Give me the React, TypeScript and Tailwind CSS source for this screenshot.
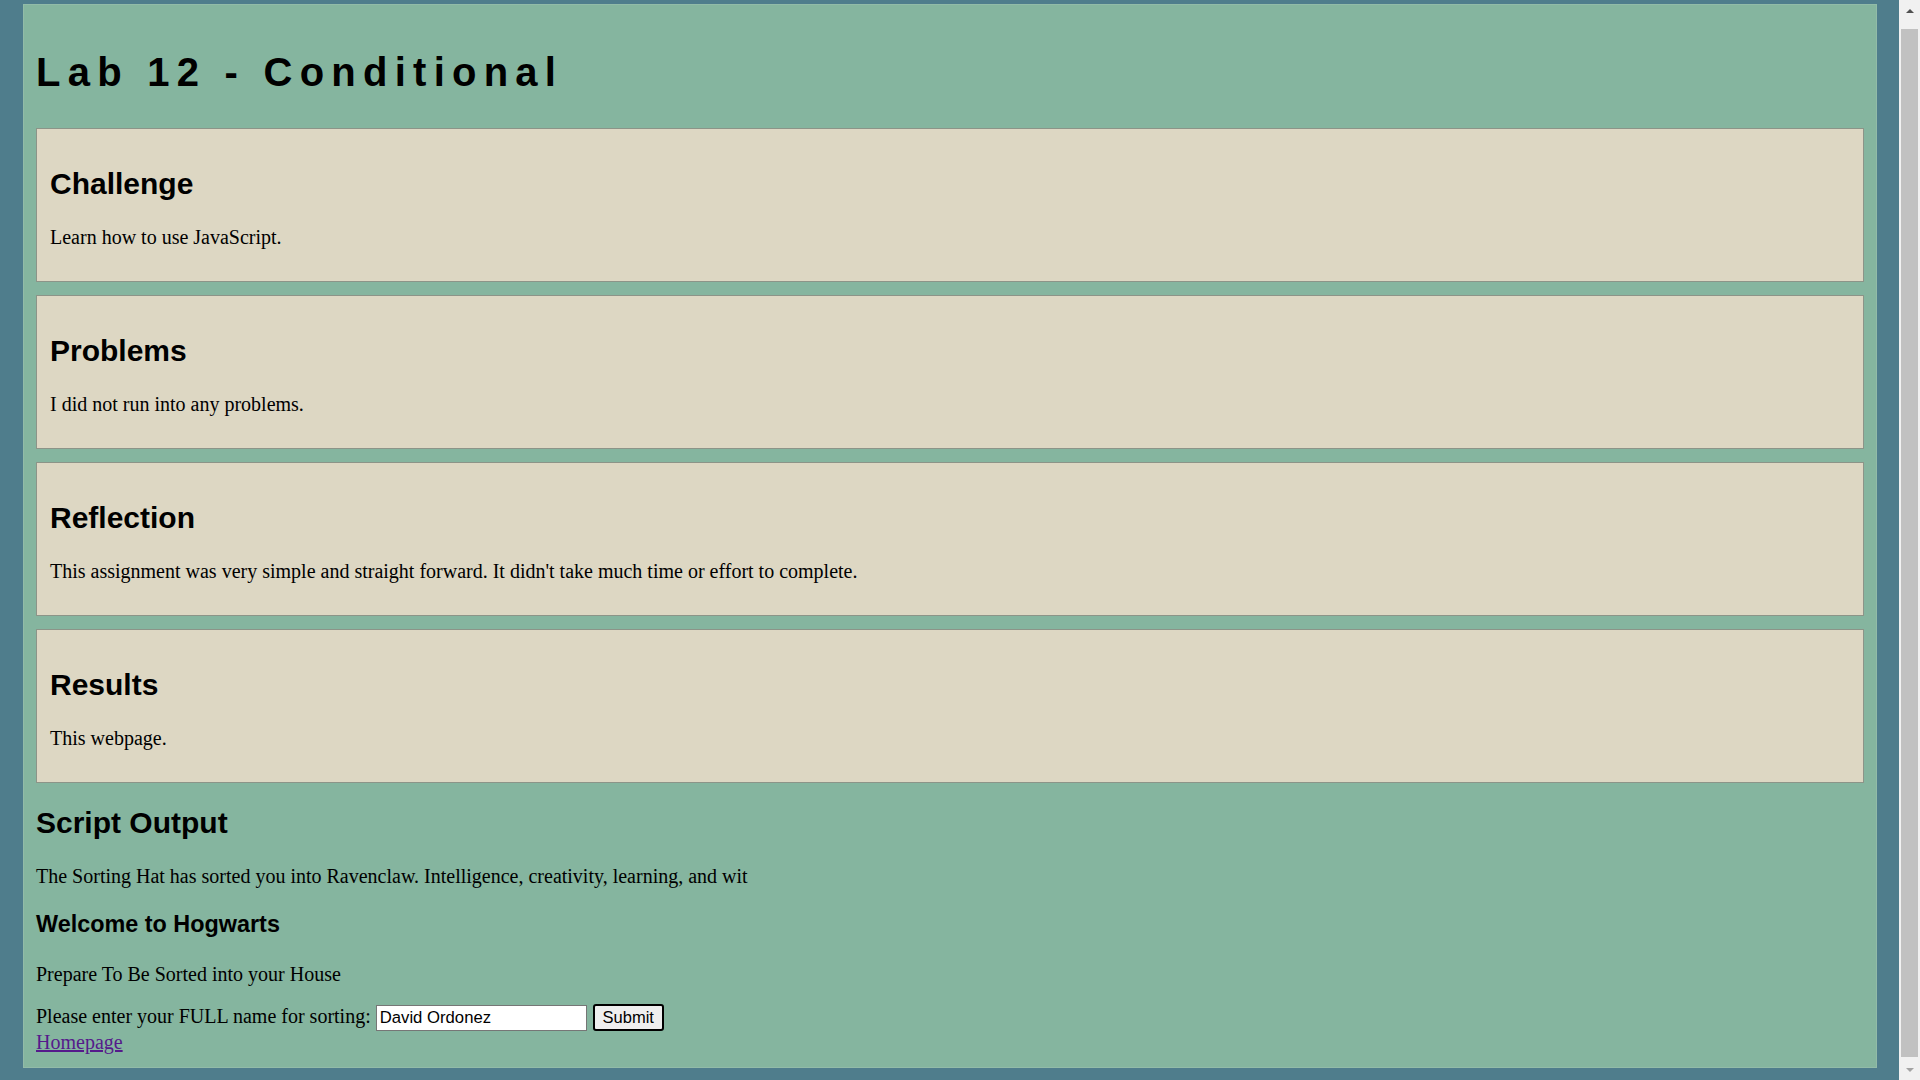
import React from 'react';

const sections = [
  { title: 'Challenge', body: 'Learn how to use JavaScript.' },
  { title: 'Problems', body: 'I did not run into any problems.' },
  {
    title: 'Reflection',
    body: "This assignment was very simple and straight forward. It didn't take much time or effort to complete.",
  },
  { title: 'Results', body: 'This webpage.' },
];

const sans = "font-['Liberation_Sans',Arial,sans-serif]";

function Scrollbar() {
  return (
    <div className="w-[21px] h-full bg-[#f1f1f1] flex flex-col shrink-0">
      <div className="h-[21px] flex items-center justify-center">
        <div className="w-0 h-0 border-l-[4px] border-r-[4px] border-b-[4px] border-l-transparent border-r-transparent border-b-[#505050]" />
      </div>
      <div className="mt-[8px] mx-[2px] h-[1028px] bg-[#c1c1c1]" />
      <div className="flex-1" />
      <div className="h-[21px] flex items-center justify-center">
        <div className="w-0 h-0 border-l-[4px] border-r-[4px] border-t-[4px] border-l-transparent border-r-transparent border-t-[#a3a3a3]" />
      </div>
    </div>
  );
}

export default function App() {
  return (
    <div className="w-full h-screen flex overflow-hidden bg-[#4f7d8c] font-['Liberation_Serif','Times_New_Roman',serif] text-[20px] text-black">
      <div className="flex-1 min-w-0">
        <main className="mt-[4px] ml-[23px] mr-[22px] border border-[#92bba8] bg-[#85b59f] px-[12px] pb-[13px]">
          {/* Title */}
          <h1 className={`${sans} mt-[44px] mb-[33px] text-[40px] leading-[46px] font-bold tracking-[7.25px]`}>
            Lab 12 - Conditional
          </h1>

          {/* Report boxes */}
          <div className="flex flex-col gap-[13px]">
            {sections.map((s) => (
              <section
                key={s.title}
                className="border border-[#8c9488] bg-[#ddd7c3] px-[13px] pt-[38px] pb-[32px]"
              >
                <h2 className={`${sans} text-[30px] leading-[34px] font-bold`}>{s.title}</h2>
                <p className="mt-[25px] leading-[23px]">{s.body}</p>
              </section>
            ))}
          </div>

          {/* Output */}
          <h2 className={`${sans} mt-[23px] text-[30px] leading-[34px] font-bold`}>Script Output</h2>
          <p className="mt-[25px] leading-[23px]">
            The Sorting Hat has sorted you into Ravenclaw. Intelligence, creativity, learning, and wit
          </p>
          <h3 className={`${sans} mt-[23px] text-[23.4px] leading-[27px] font-bold`}>Welcome to Hogwarts</h3>
          <p className="mt-[25px] leading-[23px]">Prepare To Be Sorted into your House</p>

          <form className="mt-[18px] leading-[23px]" onSubmit={(e) => e.preventDefault()}>
            Please enter your FULL name for sorting:{' '}
            <input
              type="text"
              defaultValue="David Ordonez"
              className={`${sans} w-[211px] h-[26px] border border-[#767676] bg-white px-[3px] text-[16.7px] align-baseline`}
            />{' '}
            <button
              type="submit"
              className={`${sans} ml-[1px] h-[27px] w-[71px] rounded-[3px] border-2 border-black bg-[#efefef] text-[16.5px] align-baseline`}
            >
              Submit
            </button>
          </form>
          <a href="#" className="block w-fit leading-[23px] text-[#551a8b] underline">
            Homepage
          </a>
        </main>
      </div>
      <Scrollbar />
    </div>
  );
}
